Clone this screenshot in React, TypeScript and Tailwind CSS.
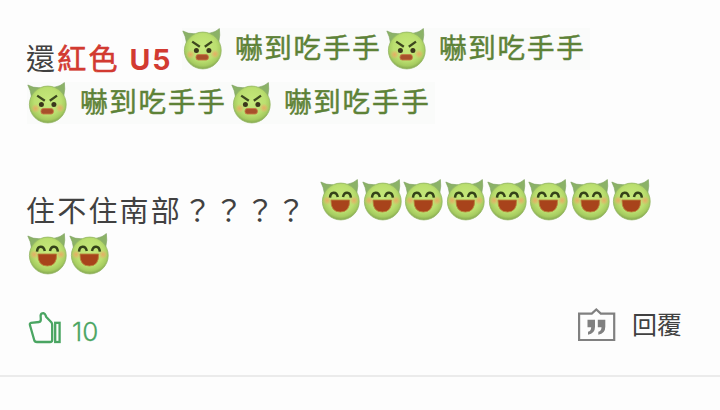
interface FaceProps {
  mood: 'angry' | 'laugh'
}

function Face({ mood }: FaceProps) {
  return (
    <svg viewBox="0 0 40 42" className="block h-[42px] w-10 shrink-0">
      <defs>
        <radialGradient id={`skin-${mood}`} cx="0.5" cy="0.42" r="0.56">
          <stop offset="0" stopColor="#c6e97b" />
          <stop offset="0.65" stopColor="#bbdf70" />
          <stop offset="0.88" stopColor="#a6cc60" />
          <stop offset="1" stopColor="#8caf53" />
        </radialGradient>
        <radialGradient id={`cheek-${mood}`}>
          <stop offset="0" stopColor="#eba763" stopOpacity="0.9" />
          <stop offset="0.5" stopColor="#ebad65" stopOpacity="0.5" />
          <stop offset="1" stopColor="#ebb56a" stopOpacity="0" />
        </radialGradient>
      </defs>
      <path d="M0.8 3 Q6 6 13 5.8 L4.5 15 Q3.6 8 0.8 3Z" fill="#8bb267" stroke="#7aa05a" strokeWidth="0.6" />
      <path d="M37.4 0.6 Q33.5 4.3 27.5 5.2 L36.8 14 Q38.4 7 37.4 0.6Z" fill="#8bb267" stroke="#7aa05a" strokeWidth="0.6" />
      <circle cx="20.8" cy="22.5" r="18.4" fill={`url(#skin-${mood})`} stroke="#94b664" strokeWidth="0.8" />
      {mood === 'angry' ? (
        <>
          <circle cx="8.6" cy="26.5" r="4.6" fill="url(#cheek-angry)" />
          <circle cx="33" cy="26" r="4.6" fill="url(#cheek-angry)" />
          <path d="M10.2 13.6 L17.8 18.8 M30 13.6 L22.8 18.8" stroke="#3d481f" strokeWidth="2.3" fill="none" />
          <circle cx="14.4" cy="22.4" r="2.5" fill="#3b371c" />
          <circle cx="26.9" cy="22.4" r="2.5" fill="#3b371c" />
          <rect x="14" y="26.6" width="12.4" height="5.4" rx="2.3" fill="#a8502b" stroke="#c57943" strokeWidth="0.9" />
        </>
      ) : (
        <>
          <circle cx="7.2" cy="21.5" r="4.6" fill="url(#cheek-laugh)" />
          <circle cx="34" cy="21.5" r="4.6" fill="url(#cheek-laugh)" />
          <path d="M10 18.6 C10.5 12.2 16.5 12.2 17.8 18 M23 18 C24.2 12.2 30.2 12.2 30.9 18.6" stroke="#344219" strokeWidth="2.5" fill="none" />
          <path d="M11 21 H29.6 Q30 33 20.3 33 Q10.6 33 11 21Z" fill="#a8431b" stroke="#b9853c" strokeWidth="0.9" />
        </>
      )}
    </svg>
  )
}

function Sticker() {
  return (
    <div className="flex h-[42px] w-[204px] shrink-0 bg-[#fafbfa]">
      <Face mood="angry" />
      <span className="ml-[13px] whitespace-nowrap text-[27.5px] leading-[41px] tracking-[1.8px] text-[#5d8237] [-webkit-text-stroke:0.5px_#5d8237]">
        嚇到吃手手
      </span>
    </div>
  )
}

function Faces({ count }: { count: number }) {
  return (
    <div className="flex gap-[1.65px]">
      {Array.from({ length: count }, (_, i) => (
        <Face key={i} mood="laugh" />
      ))}
    </div>
  )
}

export default function App() {
  return (
    <div className="h-[410px] w-[720px] overflow-hidden bg-[#fdfdfd] font-['Inter','Noto_Sans_CJK_TC',sans-serif] text-[#414141]">
      <div className="flex h-[377px] flex-col border-b-2 border-[#ebebeb] pl-[26px]" lang="zh-Hant">
        <div className="mt-7 flex h-[54px]">
          <div className="w-[156px] whitespace-nowrap pt-3 text-[29px] leading-10 tracking-[2.2px]">
            還
            <span className="text-[#d23a31] [-webkit-text-stroke:0.6px_#d23a31]">紅色</span>
            <span className="ml-2.5 font-['Inter'] text-[28.5px] font-bold tracking-[1.8px] text-[#d23a31]">U5</span>
          </div>
          <Sticker />
          <Sticker />
        </div>
        <div className="flex h-[97px] pl-px">
          <Sticker />
          <Sticker />
        </div>
        <div className="flex h-[54px]">
          <div className="w-[294px] whitespace-nowrap pt-[13px] text-[29px] leading-10 tracking-[2.2px]">
            住不住南部<span className="ml-px">？？？？</span>
          </div>
          <Faces count={8} />
        </div>
        <div className="pl-px">
          <Faces count={2} />
        </div>
        <div className="mt-7 flex h-12 items-center justify-between pr-[38px]">
          <button className="flex items-center text-[#4aa562]">
            <svg viewBox="0 0 36 36" className="h-9 w-9" fill="none" stroke="currentColor" strokeWidth="2.3" strokeLinejoin="round">
              <path d="M5 13.8 L13.2 13 Q15 12.5 14.8 10 L14.6 6.5 Q15 4.2 17.4 4.2 Q19 4.5 20.3 8 L25.3 13.2 Q26.2 14.2 26.2 16 V31 Q26.2 33 24 33 H11 Q8.6 33 8.2 31 L4.2 17 Q3.2 14.2 5 13.8Z" />
              <rect x="29.2" y="13.8" width="4.4" height="19.2" strokeLinejoin="miter" />
            </svg>
            <span className="ml-2.5 pt-[9px] text-[26px] font-light leading-8 [-webkit-text-stroke:0.3px_#4aa562]">10</span>
          </button>
          <button className="flex items-center">
            <svg viewBox="0 0 40 36" className="h-9 w-10 overflow-visible">
              <path d="M3.1 4.6 H15.8 L20.3 0.5 L24.8 4.6 H38.2 V31 H3.1Z" fill="none" stroke="#808080" strokeWidth="2.2" />
              <path d="M11.5 10.8 H19 V17.8 Q19 24.6 12 25.8 V22.8 Q15.2 21.8 15.2 18.2 H11.5Z M21.8 10.8 H29.3 V17.8 Q29.3 24.6 22.3 25.8 V22.8 Q25.5 21.8 25.5 18.2 H21.8Z" fill="#808080" />
            </svg>
            <span className="ml-4 pb-[3px] text-[25px]">回覆</span>
          </button>
        </div>
      </div>
    </div>
  )
}
